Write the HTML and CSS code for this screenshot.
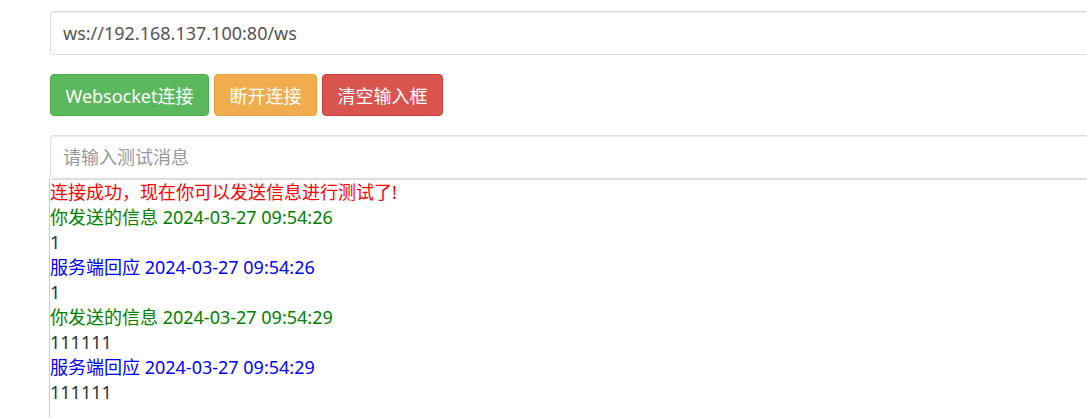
FILE: index.html
```html
<!DOCTYPE html>
<html lang="zh-CN">
<head>
  <meta charset="UTF-8">
  <meta name="viewport" content="width=device-width, initial-scale=1.0">
  <title>Websocket 测试</title>
  <link rel="stylesheet" href="styles.css">
</head>
<body>

<div class="container">
  <input type="text" id="ws-url" class="form-control" value="ws://192.168.137.100:80/ws">

  <div class="btn-row">
    <button class="btn btn-success">Websocket连接</button>
    <button class="btn btn-warning">断开连接</button>
    <button class="btn btn-danger">清空输入框</button>
  </div>

  <input type="text" id="msg" class="form-control" placeholder="请输入测试消息">

  <!-- Log dei messaggi -->
  <div id="log" class="log">
    <div class="ok">连接成功，现在你可以发送信息进行测试了!</div>
    <div class="sent">你发送的信息 2024-03-27 09:54:26</div>
    <div>1</div>
    <div class="recv">服务端回应 2024-03-27 09:54:26</div>
    <div>1</div>
    <div class="sent">你发送的信息 2024-03-27 09:54:29</div>
    <div>111111</div>
    <div class="recv">服务端回应 2024-03-27 09:54:29</div>
    <div>111111</div>
  </div>
</div>

</body>
</html>
```

FILE: styles.css
```css
html, body {
  overflow: hidden;
}

body {
  font-family: 'Noto Sans', 'Noto Sans CJK SC', sans-serif;
  background-color: #fff;
  color: #333;
  margin: 0;
}

.container {
  margin-left: 50px;
  padding-top: 11px;
  width: 1100px;
}

.form-control {
  display: block;
  box-sizing: border-box;
  width: 100%;
  height: 44px;
  padding: 6px 12px;
  font-family: inherit;
  font-size: 18px;
  color: #555;
  background-color: #fff;
  border: 1px solid #ddd;
  border-radius: 4px;
  box-shadow: inset 0 1px 1px rgba(0, 0, 0, 0.075);
}

.form-control::placeholder {
  color: #999;
}

.btn-row {
  display: flex;
  gap: 5px;
  margin: 19px 0 19px;
}

.btn {
  height: 42px;
  padding: 0 14.5px;
  font-family: inherit;
  font-size: 18px;
  color: #fff;
  border: 1px solid transparent;
  border-radius: 4px;
  cursor: pointer;
}

.btn-success {
  background-color: #5cb85c;
  border-color: #4cae4c;
}

.btn-warning {
  background-color: #f0ad4e;
  border-color: #eea236;
}

.btn-danger {
  background-color: #d9534f;
  border-color: #d43f3a;
}

.log {
  margin-left: -1px;
  min-height: 300px;
  border: 1px solid #ccc;
  border-top-color: #ddd;
  font-size: 18px;
  line-height: 25px;
}

.ok {
  color: #f00;
}

.sent {
  color: #008000;
}

.recv {
  color: #00f;
}
```
